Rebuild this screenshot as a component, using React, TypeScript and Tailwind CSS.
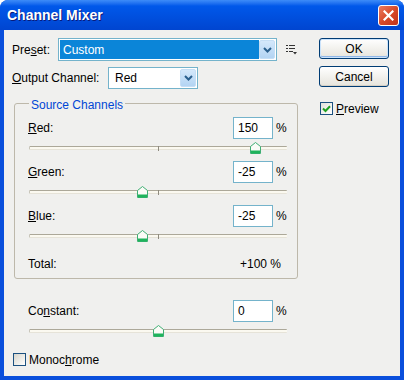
import React from 'react';

function Thumb({ left }: { left: number }) {
  return (
    <svg className="absolute top-[3px]" style={{ left }} width="11" height="12" viewBox="0 0 11 12">
      <path d="M0.5 4.5 L5.5 0.5 L10.5 4.5 V11.5 H0.5 Z" fill="#fbfbf7" stroke="#3fae74" />
      <rect x="1" y="8.5" width="9" height="3" fill="#1fb45c" />
    </svg>
  );
}

function Slider({ value, tick = true }: { value: number; tick?: boolean }) {
  const pos = ((value + 200) / 400) * 258;
  return (
    <div className="relative ml-px h-[22px] w-[258px]">
      <div className="absolute left-0 right-0 top-[7px] h-[4px] rounded-[1px] border-t border-b border-t-[#aca899] border-b-[#e6e3d8] border-l border-l-[#c9c6bb] bg-[#fbf9f0]" />
      {tick && <div className="absolute left-[129px] top-[7px] h-[5px] w-px bg-[#8f8b7f]" />}
      <Thumb left={Math.round(pos - 5)} />
    </div>
  );
}

function ChannelRow({ label, u, rest, value }: { label?: string; u: string; rest: string; value: string }) {
  return (
    <div className="flex h-[22px] items-center">
      <span className="flex-1">
        {label}
        <span className="underline">{u}</span>
        {rest}
      </span>
      <div className="flex h-[22px] w-[40px] items-center border border-[#74b3cb] bg-white pl-[4px]">{value}</div>
      <span className="ml-[3px] w-[11px]">%</span>
    </div>
  );
}

function ComboArrow() {
  return (
    <div className="flex h-full w-[16px] items-center justify-center rounded-[2px] border border-[#c5def5] bg-gradient-to-b from-[#d4e8fb] to-[#b3d4f3]">
      <svg width="9" height="6" viewBox="0 0 9 6">
        <path d="M1 1 L4.5 4.5 L8 1" fill="none" stroke="#2a5f8d" strokeWidth="2" />
      </svg>
    </div>
  );
}

export default function App() {
  return (
    <div className="flex h-[380px] w-[404px] flex-col overflow-hidden rounded-t-[8px] bg-[#0a4fdc] font-['Liberation_Sans',sans-serif] text-[12px] text-black">
      {/* Title bar */}
      <div className="flex h-[30px] shrink-0 items-center justify-between bg-gradient-to-b from-[#3d8cf8] via-[#0058ea] via-20% to-[#0045d0] pl-[7px] pr-[5px]">
        <span className="text-[14px] font-bold text-white [text-shadow:1px_1px_0_#0a1a7a]">Channel Mixer</span>
        <div className="flex h-[21px] w-[21px] items-center justify-center rounded-[3px] border border-white bg-gradient-to-br from-[#ea7a5e] via-[#d84a2a] to-[#c2321a]">
          <svg width="11" height="11" viewBox="0 0 11 11">
            <path d="M1.5 1.5 L9.5 9.5 M9.5 1.5 L1.5 9.5" stroke="white" strokeWidth="2.2" strokeLinecap="square" />
          </svg>
        </div>
      </div>

      {/* Body */}
      <div className="mx-[4px] mb-[4px] flex flex-1 bg-[#f0f0ee]">
        {/* Left column */}
        <div className="flex w-[300px] flex-col">
          <div className="mt-[8px] flex h-[23px] items-center pl-[8px]">
            <span className="w-[46px]">
              Pre<span className="underline">s</span>et:
            </span>
            <div className="flex h-[23px] w-[219px] items-center border border-[#74b3cb] bg-white p-[1px]">
              <div className="flex h-full flex-1 items-center bg-[#0b85d8] pl-[3px] text-white">Custom</div>
              <ComboArrow />
            </div>
            <svg className="ml-[9px]" width="11" height="10" viewBox="0 0 11 10">
              <rect x="0" y="0" width="2" height="1" fill="#333" />
              <rect x="3" y="0" width="6" height="1" fill="#333" />
              <rect x="0" y="3" width="2" height="1" fill="#333" />
              <rect x="3" y="3" width="6" height="1" fill="#333" />
              <rect x="0" y="6" width="2" height="1" fill="#333" />
              <rect x="3" y="6" width="4" height="1" fill="#333" />
              <path d="M7 7 H11 L9 9.5 Z" fill="#333" />
            </svg>
          </div>

          <div className="mt-[6px] flex h-[22px] items-center pl-[8px]">
            <span className="w-[96px]">
              <span className="underline">O</span>utput Channel:
            </span>
            <div className="flex h-[22px] w-[90px] items-center border border-[#74b3cb] bg-white p-[1px]">
              <span className="flex-1 pl-[5px]">Red</span>
              <ComboArrow />
            </div>
          </div>

          {/* Source Channels group */}
          <div className="relative mt-[14px] ml-[10px] mr-[6px] rounded-[3px] border border-[#bdb8aa] pt-[13px] pb-[6px] pl-[13px] pr-[10px]">
            <span className="absolute -top-[8px] left-[14px] bg-[#f0f0ee] px-[2px] text-[#0046d5]">Source Channels</span>
            <ChannelRow u="R" rest="ed:" value="150" />
            <Slider value={150} />
            <ChannelRow u="G" rest="reen:" value="-25" />
            <Slider value={-25} />
            <ChannelRow u="B" rest="lue:" value="-25" />
            <Slider value={-25} />
            <div className="mt-[7px] flex h-[16px] items-center pr-[6px]">
              <span className="flex-1">Total:</span>
              <span>+100 %</span>
            </div>
          </div>

          <div className="mt-[21px] pl-[24px] pr-[17px]">
            <ChannelRow label="Co" u="n" rest="stant:" value="0" />
            <Slider value={0} tick={false} />
          </div>

          <div className="mt-[9px] flex h-[13px] items-center pl-[9px]">
            <div className="h-[13px] w-[13px] border border-[#1c5180] bg-gradient-to-br from-[#d8d6cc] to-white" />
            <span className="ml-[3px]">
              Monoc<span className="underline">h</span>rome
            </span>
          </div>
        </div>

        {/* Right column */}
        <div className="flex flex-1 flex-col pl-[15px]">
          <button className="mt-[8px] h-[21px] w-[70px] rounded-[3px] border border-[#003c74] bg-gradient-to-b from-white to-[#e6e4dc] shadow-[inset_0_0_0_1px_#cbe3fb,inset_0_-1px_0_1px_#8fb6e8]">
            OK
          </button>
          <button className="mt-[7px] h-[21px] w-[70px] rounded-[3px] border border-[#003c74] bg-gradient-to-b from-white to-[#e6e4dc] shadow-[inset_0_-1px_0_0_#d6d0c5]">
            Cancel
          </button>
          <div className="mt-[15px] ml-px flex h-[13px] items-center">
            <div className="flex h-[13px] w-[13px] items-center justify-center border border-[#1c5180] bg-gradient-to-br from-[#e4e2da] to-white">
              <svg width="9" height="8" viewBox="0 0 9 8">
                <path d="M1 3.5 L3.5 6 L8 1.2" fill="none" stroke="#21a121" strokeWidth="2" />
              </svg>
            </div>
            <span className="ml-[3px]">
              <span className="underline">P</span>review
            </span>
          </div>
        </div>
      </div>
    </div>
  );
}
